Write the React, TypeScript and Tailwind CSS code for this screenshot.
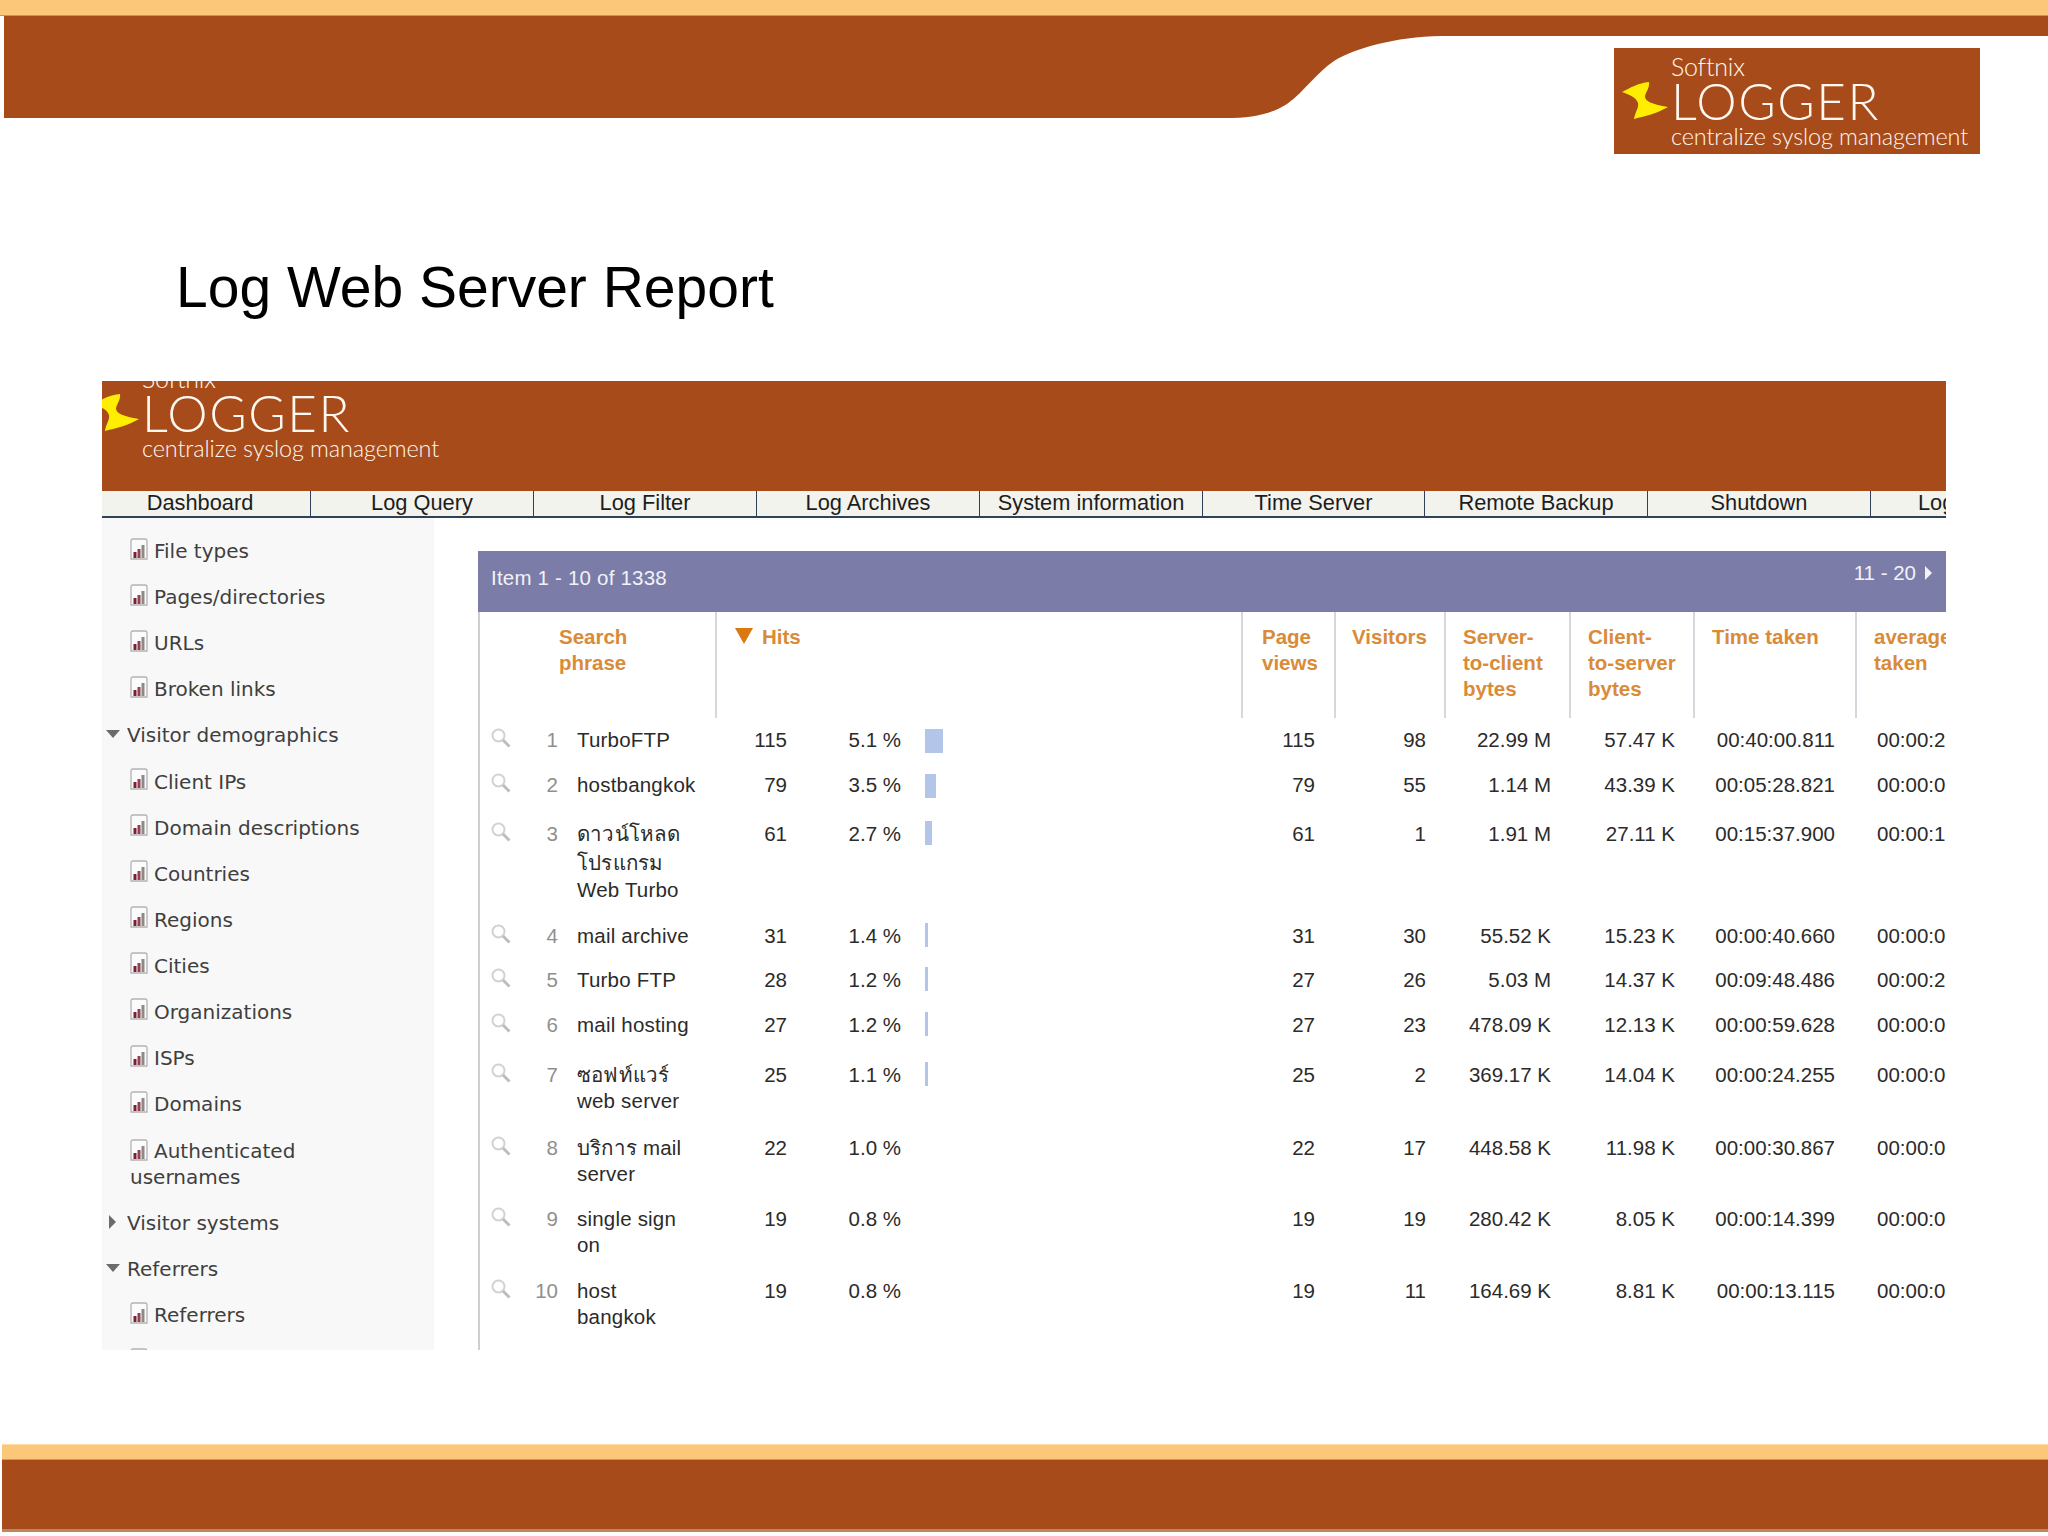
const cols = "grid grid-cols-[237px_526px_93px_110px_125px_124px_162px_91px]";

const navItems = [
  { label: "Dashboard", width: "w-[209px] pr-[12px]" },
  { label: "Log Query", width: "w-[223px]" },
  { label: "Log Filter", width: "w-[223px]" },
  { label: "Log Archives", width: "w-[223px]" },
  { label: "System information", width: "w-[223px]" },
  { label: "Time Server", width: "w-[222px]" },
  { label: "Remote Backup", width: "w-[223px]" },
  { label: "Shutdown", width: "w-[223px]" },
];

const sideItems = [
  { label: "File types", kind: "report" },
  { label: "Pages/directories", kind: "report" },
  { label: "URLs", kind: "report" },
  { label: "Broken links", kind: "report" },
  { label: "Visitor demographics", kind: "open" },
  { label: "Client IPs", kind: "report" },
  { label: "Domain descriptions", kind: "report" },
  { label: "Countries", kind: "report" },
  { label: "Regions", kind: "report" },
  { label: "Cities", kind: "report" },
  { label: "Organizations", kind: "report" },
  { label: "ISPs", kind: "report" },
  { label: "Domains", kind: "report" },
  { label: "Authenticated usernames", kind: "wrap" },
  { label: "Visitor systems", kind: "closed" },
  { label: "Referrers", kind: "open" },
  { label: "Referrers", kind: "report" },
  { label: "", kind: "report" },
];

const rows = [
  { h: "h-[45px]", n: 1, phrase: ["TurboFTP"], hits: 115, pct: "5.1 %", bar: "w-[18px]", pv: 115, vis: 98, sc: "22.99 M", cs: "57.47 K", time: "00:40:00.811", avg: "00:00:2" },
  { h: "h-[49px]", n: 2, phrase: ["hostbangkok"], hits: 79, pct: "3.5 %", bar: "w-[11px]", pv: 79, vis: 55, sc: "1.14 M", cs: "43.39 K", time: "00:05:28.821", avg: "00:00:0" },
  { h: "h-[102px]", n: 3, phrase: ["ดาวน์โหลด", "โปรแกรม", "Web Turbo"], hits: 61, pct: "2.7 %", bar: "w-[7px]", pv: 61, vis: 1, sc: "1.91 M", cs: "27.11 K", time: "00:15:37.900", avg: "00:00:1" },
  { h: "h-[44px]", n: 4, phrase: ["mail archive"], hits: 31, pct: "1.4 %", bar: "w-[3px]", pv: 31, vis: 30, sc: "55.52 K", cs: "15.23 K", time: "00:00:40.660", avg: "00:00:0" },
  { h: "h-[45px]", n: 5, phrase: ["Turbo FTP"], hits: 28, pct: "1.2 %", bar: "w-[3px]", pv: 27, vis: 26, sc: "5.03 M", cs: "14.37 K", time: "00:09:48.486", avg: "00:00:2" },
  { h: "h-[50px]", n: 6, phrase: ["mail hosting"], hits: 27, pct: "1.2 %", bar: "w-[3px]", pv: 27, vis: 23, sc: "478.09 K", cs: "12.13 K", time: "00:00:59.628", avg: "00:00:0" },
  { h: "h-[73px]", n: 7, phrase: ["ซอฟท์แวร์", "web server"], hits: 25, pct: "1.1 %", bar: "w-[3px]", pv: 25, vis: 2, sc: "369.17 K", cs: "14.04 K", time: "00:00:24.255", avg: "00:00:0" },
  { h: "h-[71px]", n: 8, phrase: ["บริการ mail", "server"], hits: 22, pct: "1.0 %", bar: "", pv: 22, vis: 17, sc: "448.58 K", cs: "11.98 K", time: "00:00:30.867", avg: "00:00:0" },
  { h: "h-[72px]", n: 9, phrase: ["single sign", "on"], hits: 19, pct: "0.8 %", bar: "", pv: 19, vis: 19, sc: "280.42 K", cs: "8.05 K", time: "00:00:14.399", avg: "00:00:0" },
  { h: "h-[82px]", n: 10, phrase: ["host", "bangkok"], hits: 19, pct: "0.8 %", bar: "", pv: 19, vis: 11, sc: "164.69 K", cs: "8.81 K", time: "00:00:13.115", avg: "00:00:0" },
];

const headCell = "border-l-2 border-[#d5d7dc] pt-[12px] pl-[17px]";

const Bolt = ({ className }: { className: string }) => (
  <svg viewBox="0 0 46 37" className={className}>
    <path
      d="M0 10 C8 6 16 1 27 0 C28 6 23 11 23 15 C24 20 30 22 46 25 C36 31 24 34 12 37 C13 30 17 26 16 21 C14 15 8 13 0 10 Z"
      fill="#ffee00"
    />
  </svg>
);

const Logo = () => (
  <div className="flex flex-col font-['Lato',sans-serif] font-light text-[#fff8f0]">
    <div className="pl-[49px] text-[25px] leading-[27px] tracking-[-0.2px]">Softnix</div>
    <div className="flex items-center">
      <Bolt className="w-[46px] h-[37px] shrink-0" />
      <div className="ml-[3px] text-[51px] leading-[41px] tracking-[1.6px]">LOGGER</div>
    </div>
    <div className="pl-[49px] mt-[2px] text-[23.4px] leading-[26px] tracking-[-0.1px] whitespace-nowrap">
      centralize syslog management
    </div>
  </div>
);

const ReportIcon = () => (
  <svg viewBox="0 0 18 22" className="inline-block w-[18px] h-[22px] -mt-[5px] align-middle mr-[6px] shrink-0">
    <path d="M1 21 V3 Q1 1 3 1 H15 Q17 1 17 3 V21 Z" fill="#fbfbfb" stroke="#b3b3b3" strokeWidth="1.3" />
    <rect x="3.5" y="14" width="3" height="6" fill="#7a2034" />
    <rect x="7.5" y="11" width="3" height="9" fill="#94404f" />
    <rect x="11.5" y="7" width="3" height="13" fill="#8a8a8a" />
  </svg>
);

const SearchIcon = () => (
  <svg viewBox="0 0 20 20" className="ml-[13px] mt-[1px] w-[20px] h-[20px] shrink-0" fill="none">
    <circle cx="7.5" cy="7.5" r="6" stroke="#d2d2d2" strokeWidth="2" />
    <path d="M12 12 L18.5 18.5" stroke="#bdbdbd" strokeWidth="3" />
  </svg>
);

const SideRow = ({ label, kind }: { label: string; kind: string }) => {
  if (kind === "open" || kind === "closed") {
    return (
      <div className="h-[46.1px] flex items-center text-[#3f3f3f]">
        <span className="w-[21px] mr-[4px] flex justify-center -mt-[3px]">
          {kind === "open" ? (
            <span className="w-0 h-0 border-l-[7px] border-r-[7px] border-t-[8px] border-l-transparent border-r-transparent border-t-[#6b6b6b]" />
          ) : (
            <span className="w-0 h-0 border-t-[7px] border-b-[7px] border-l-[7px] border-t-transparent border-b-transparent border-l-[#6b6b6b]" />
          )}
        </span>
        <span>{label}</span>
      </div>
    );
  }
  if (kind === "wrap") {
    return (
      <div className="pl-[28px] pt-[11px] pb-[10px] w-[230px] leading-[26px] text-[#3f3f3f]">
        <ReportIcon />
        {label}
      </div>
    );
  }
  return (
    <div className="h-[46.1px] flex items-center pl-[28px] text-[#3f3f3f]">
      <ReportIcon />
      <span>{label}</span>
    </div>
  );
};

export default function App() {
  return (
    <div className="w-[2048px] h-[1536px] bg-white overflow-hidden flex flex-col font-['Liberation_Sans',sans-serif]">
      <div className="h-[16px] bg-[#fcc778] shrink-0" />
      <div className="flex h-[140px] pl-[4px] shrink-0 border-t border-[#d9903f] -mt-px">
        <div className="w-[1221px] h-[102px] bg-[#a84b1b]" />
        <svg viewBox="0 0 216 102" className="w-[216px] h-[102px] shrink-0">
          <path
            d="M0 0 H216 V20 C170 21 130 32 109 45 C90 58 80 75 62 88 C48 97 30 102 0 102 Z"
            fill="#a84b1b"
          />
        </svg>
        <div className="flex-1 flex flex-col">
          <div className="h-[20px] bg-[#a84b1b]" />
          <div className="ml-[173px] mt-[12px] w-[366px] h-[106px] bg-[#a84b1b] overflow-hidden pt-[5px] pl-[8px]">
            <Logo />
          </div>
        </div>
      </div>

      <h1 className="ml-[176px] mt-[99px] text-[57px] leading-[66px] text-black font-normal">
        Log Web Server Report
      </h1>

      <div className="ml-[102px] mt-[61px] w-[1844px] h-[969px] shrink-0 flex flex-col overflow-hidden">
        <div className="h-[110px] shrink-0 bg-[#a84b1b] overflow-hidden">
          <div className="-mt-[16px] -ml-[9px]">
            <Logo />
          </div>
        </div>

        <div className="h-[27px] shrink-0 flex bg-[#f3f3ee] border-b-2 border-[#2f4156] text-[21.8px] leading-[24px] text-[#1d1d1d] overflow-hidden">
          {navItems.map((item) => (
            <div key={item.label} className={`${item.width} shrink-0 border-r border-[#2f4156] text-center whitespace-nowrap`}>
              {item.label}
            </div>
          ))}
          <div className="pl-[47px] whitespace-nowrap">Log</div>
        </div>

        <div className="flex-1 flex min-h-0">
          <div className="w-[332px] shrink-0 bg-[#f8f8f8] pt-[10px] overflow-hidden font-['DejaVu_Sans',sans-serif] text-[20px]">
            {sideItems.map((item, i) => (
              <SideRow key={i} label={item.label} kind={item.kind} />
            ))}
          </div>

          <div className="ml-[44px] w-[1468px] pt-[33px] flex flex-col overflow-hidden text-[20.5px] leading-[26px]">
            <div className="h-[61px] shrink-0 bg-[#7b7ca8] flex justify-between text-[#f2f2f8] pl-[13px] pr-[14px]">
              <span className="pt-[14px] tracking-[0.2px]">Item 1 - 10 of 1338</span>
              <span className="pt-[9px] flex items-start gap-[9px]">
                11 - 20
                <span className="mt-[6px] w-0 h-0 border-t-[7px] border-b-[7px] border-l-[7px] border-t-transparent border-b-transparent border-l-[#f2f2f8]" />
              </span>
            </div>

            <div className="flex-1 border-l-2 border-[#cfcfd2] -mr-[2px]">
              <div className={`${cols} h-[106px] font-bold text-[#d98b38] -ml-[2px]`}>
                <div className="pt-[12px] pl-[81px]">
                  Search
                  <br />
                  phrase
                </div>
                <div className="border-l-2 border-[#d5d7dc] pt-[12px] pl-[18px] flex items-start gap-[9px]">
                  <span className="mt-[4px] w-0 h-0 border-l-[9px] border-r-[9px] border-t-[16px] border-l-transparent border-r-transparent border-t-[#d9790f]" />
                  Hits
                </div>
                <div className="border-l-2 border-[#d5d7dc] pt-[12px] pl-[19px]">
                  Page
                  <br />
                  views
                </div>
                <div className="border-l-2 border-[#d5d7dc] pt-[12px] pl-[16px]">Visitors</div>
                <div className={headCell}>
                  Server-
                  <br />
                  to-client
                  <br />
                  bytes
                </div>
                <div className={headCell}>
                  Client-
                  <br />
                  to-server
                  <br />
                  bytes
                </div>
                <div className={headCell}>Time taken</div>
                <div className={`${headCell} overflow-hidden whitespace-nowrap`}>
                  average
                  <br />
                  taken
                </div>
              </div>

              {rows.map((r) => (
                <div key={r.n} className={`${cols} ${r.h} -ml-[2px] pt-[9px] text-[#2b2b2b] overflow-hidden`}>
                  <div className="flex items-start">
                    <SearchIcon />
                    <span className="w-[47px] text-right text-[#8f8f8f]">{r.n}</span>
                    <div className="ml-[19px] font-['Liberation_Sans','Noto_Sans','DejaVu_Sans',sans-serif] whitespace-nowrap tracking-[0.2px]">
                      {r.phrase.map((line) => (
                        <div key={line} className={line === "โปรแกรม" ? "mt-[3px] mb-[1px]" : ""}>
                          {line}
                        </div>
                      ))}
                    </div>
                  </div>
                  <div className="flex items-start">
                    <span className="w-[72px] text-right">{r.hits}</span>
                    <span className="w-[114px] text-right">{r.pct}</span>
                    {r.bar && <span className={`${r.bar} ml-[24px] ${r.n > 2 ? "" : "mt-[2px]"} h-[24px] bg-[#b3c6ea]`} />}
                  </div>
                  <div className="text-right pr-[19px]">{r.pv}</div>
                  <div className="text-right pr-[18px]">{r.vis}</div>
                  <div className="text-right pr-[18px]">{r.sc}</div>
                  <div className="text-right pr-[18px]">{r.cs}</div>
                  <div className="text-right pr-[20px]">{r.time}</div>
                  <div className="pl-[22px] overflow-hidden whitespace-nowrap">{r.avg}</div>
                </div>
              ))}
            </div>
          </div>
        </div>
      </div>

      <div className="ml-[2px] mt-[94px] h-[16px] shrink-0 bg-[#fcc778] border-t border-[#fddca8] border-b border-b-[#c79a62]" />
      <div className="ml-[2px] h-[72px] shrink-0 bg-[#a84b1b] border-b-[3px] border-[#b98a5c]" />
    </div>
  );
}
